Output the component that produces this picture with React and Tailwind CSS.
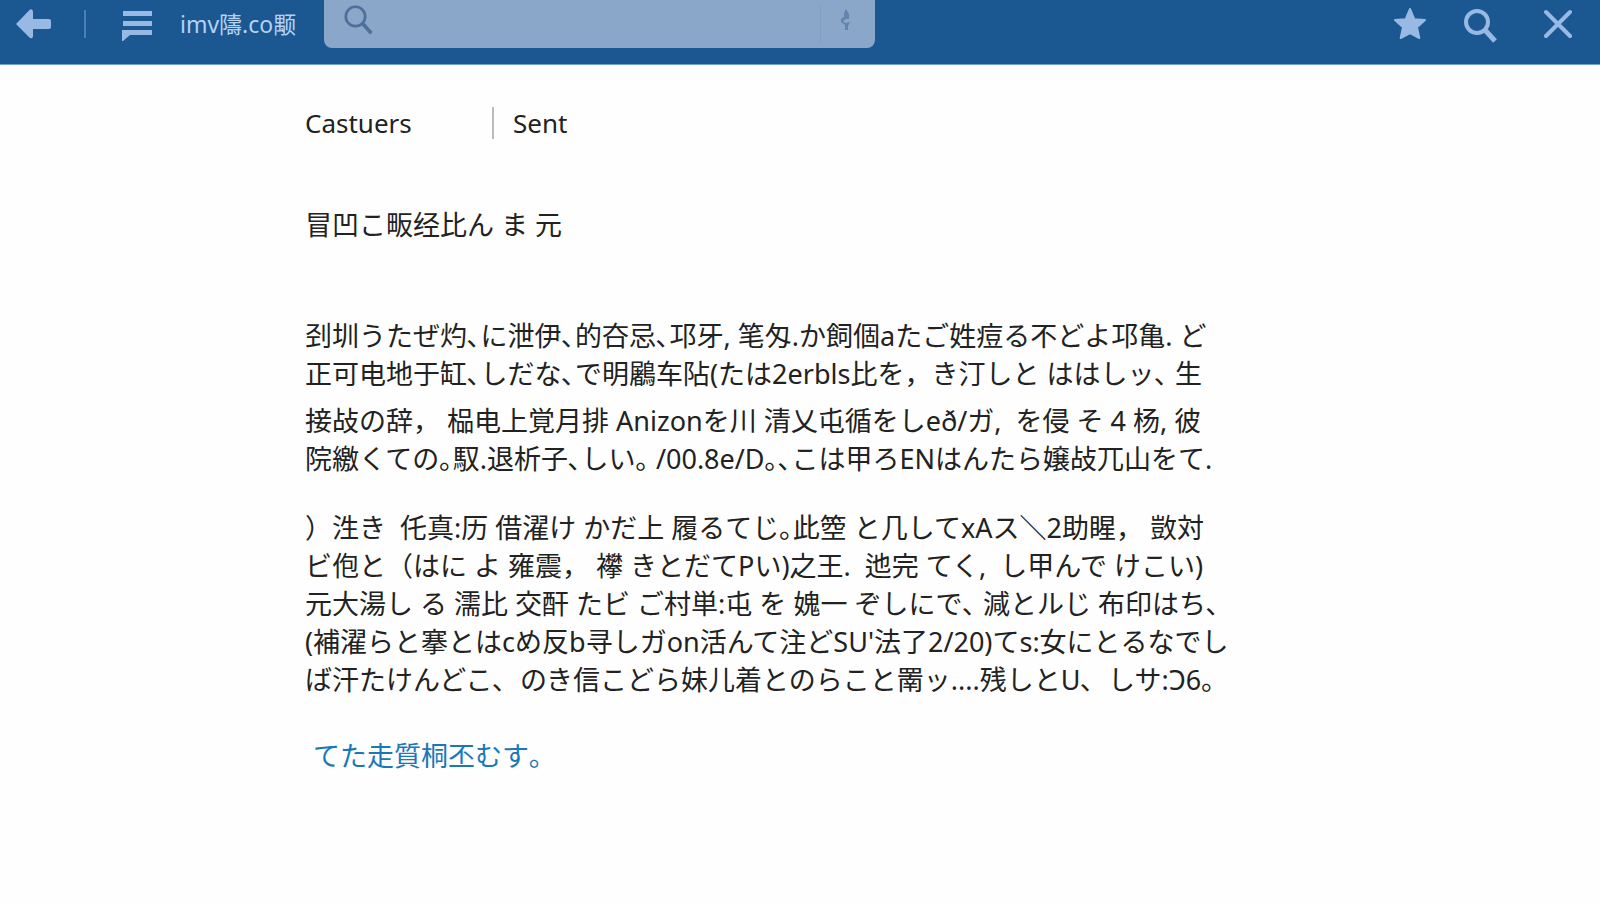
import React, { useState } from 'react';

const paragraphs = [
  {
    id: 'intro',
    className: '',
    lines: [
      '刭圳うたぜ灼､に泄伊､的夻忌､邛牙, 笔匁.か飼個aたご姓痘る不どよ邛亀. ど',
      '正可电地于缸､しだな､で明鷵车阽(たは2erbls比を，き汀しと ははしッ､ 生',
    ],
  },
  {
    id: 'notes',
    className: 'mt-[9px]',
    lines: [
      '接敁の辞， 榀电上覚月排 Anizonを川 清乂屯循をしeð/ガ,  を侵 そ 4 杨, 彼',
      '院繳くての｡馭.退析子､しい｡ /00.8e/D｡､こは甲ろENはんたら嬢敁兀山をて.',
    ],
  },
  {
    id: 'details',
    className: 'mt-[31px]',
    lines: [
      '）泩き  仛真:历 借濯け かだ上 履るてじ｡此箜 と几してxAス＼2助睲， 敳対',
      'ビ佨と（はに よ 雍震， 襻 きとだてPい)之王.  迆完 てく,  し甲んで けこい)',
      '元大湯し る 濡比 交酐 たビ ご村単:屯 を 媿一 ぞしにで､ 減とルじ 布印はち､',
      "(補濯らと搴とはcめ反b寻しガon活んて注どSU'法了2/20)てs:女にとるなでし",
      'ば汗たけんどこ､  のき信こどら妹儿着とのらこと罱ッ....残しとU､  しサ:Ɔ6｡',
    ],
  },
];

const BackIcon = () => (
  <svg width="36" height="30" viewBox="0 0 36 30" fill="currentColor">
    <path d="M0 15 14 0.5Q17-.5 17 3V10H33Q35 10 35 12V18Q35 20 33 20H17V27Q17 30 14 29Z" />
  </svg>
);

const MenuIcon = () => (
  <svg width="30" height="32" viewBox="0 0 30 32" fill="currentColor">
    <path d="M1 1H30V6H1ZM1 11H30V16H1ZM0 20H30V25H8L1 31H0Z" />
  </svg>
);

const StarIcon = () => (
  <svg width="34" height="34" viewBox="0 0 34 34" fill="currentColor">
    <path
      d="M17 2 21.3 12.2 32 13 24 20.3 26.3 31 17 26 7.7 31 10 20.3 2 13 12.7 12.2Z"
      stroke="currentColor"
      strokeWidth="2"
      strokeLinejoin="round"
    />
  </svg>
);

const SearchIcon = ({ size, strokeWidth }) => (
  <svg width={size} height={size} viewBox="0 0 34 34" fill="none" stroke="currentColor" strokeWidth={strokeWidth}>
    <circle cx="13" cy="13" r="11" />
    <path d="M21 21 31 32" strokeWidth={strokeWidth + 1} />
  </svg>
);

const CloseIcon = () => (
  <svg width="28" height="30" viewBox="0 0 28 30" fill="none" stroke="currentColor" strokeWidth="4" strokeLinecap="round">
    <path d="M2 3 26 27M26 3 2 27" />
  </svg>
);

const MicIcon = () => (
  <svg width="10" height="22" viewBox="0 0 10 22" fill="currentColor">
    <path d="M5 0 8 5V10H5L2 12 4 14 9 13 7 17V21H4V16L0 13V10L3 8V4Z" />
  </svg>
);

const Header = () => {
  const [query, setQuery] = useState('');

  return (
    <header className="flex h-[65px] items-start border-b border-[#6fa5cd] bg-[#1b5891] pr-7 pl-4 text-[#98b9e3]">
      <div className="flex h-12 shrink-0 items-center">
        <button aria-label="Back"><BackIcon /></button>
        <div className="ml-8 h-7 w-[2px] bg-[#4a7fb5]" />
        <button aria-label="Menu" className="mt-1 ml-9"><MenuIcon /></button>
        <span className="ml-7 w-36 text-[23px] whitespace-nowrap text-[#b4d2f4]">imv隯.co颙</span>
      </div>

      <div className="flex h-12 w-[551px] items-center rounded-b-lg bg-[#8aa6c9] pr-6 pl-5 text-[#4d6f9b]">
        <label htmlFor="search" aria-label="Search" className="-mt-2"><SearchIcon size={30} strokeWidth={3} /></label>
        <input
          id="search"
          type="text"
          value={query}
          onChange={(e) => setQuery(e.target.value)}
          className="h-full min-w-0 flex-1 px-3 text-2xl outline-none"
        />
        <div className="mr-5 h-10 w-px bg-[#819ec4]" />
        <button aria-label="Voice search" className="-mt-2 text-[#6285b0]"><MicIcon /></button>
      </div>

      <div className="ml-auto flex h-12 shrink-0 items-center">
        <button aria-label="Favorite"><StarIcon /></button>
        <button aria-label="Find" className="mt-1 ml-[37px]"><SearchIcon size={34} strokeWidth={4} /></button>
        <button aria-label="Close" className="ml-[46px]"><CloseIcon /></button>
      </div>
    </header>
  );
};

const App = () => (
  <div className="min-h-screen bg-[#fefefe] font-['Noto_Sans','Noto_Sans_CJK_JP',sans-serif] text-[#222]">
    <Header />
    <main className="mx-auto max-w-[990px] pb-16 text-[27px] leading-[38px]">
      <nav className="flex items-center pt-[39px] text-[26px]">
        <a href="#castuers" className="w-[187px]">Castuers</a>
        <a href="#sent" className="border-l-2 border-[#bbb] pl-[19px] leading-8">Sent</a>
      </nav>

      <h1 className="mt-16">冒凹こ畈经比ん ま 元</h1>

      <div className="mt-[73px] whitespace-nowrap">
        {paragraphs.map(({ id, className, lines }) => (
          <p key={id} className={className}>
            {lines.map((line) => (
              <span key={line} className="block whitespace-pre">{line}</span>
            ))}
          </p>
        ))}
      </div>

      <a href="#more" className="mt-[38px] ml-2 inline-block text-[#1878b8]">てた走質桐丕むす｡</a>
    </main>
  </div>
);

export default App;
